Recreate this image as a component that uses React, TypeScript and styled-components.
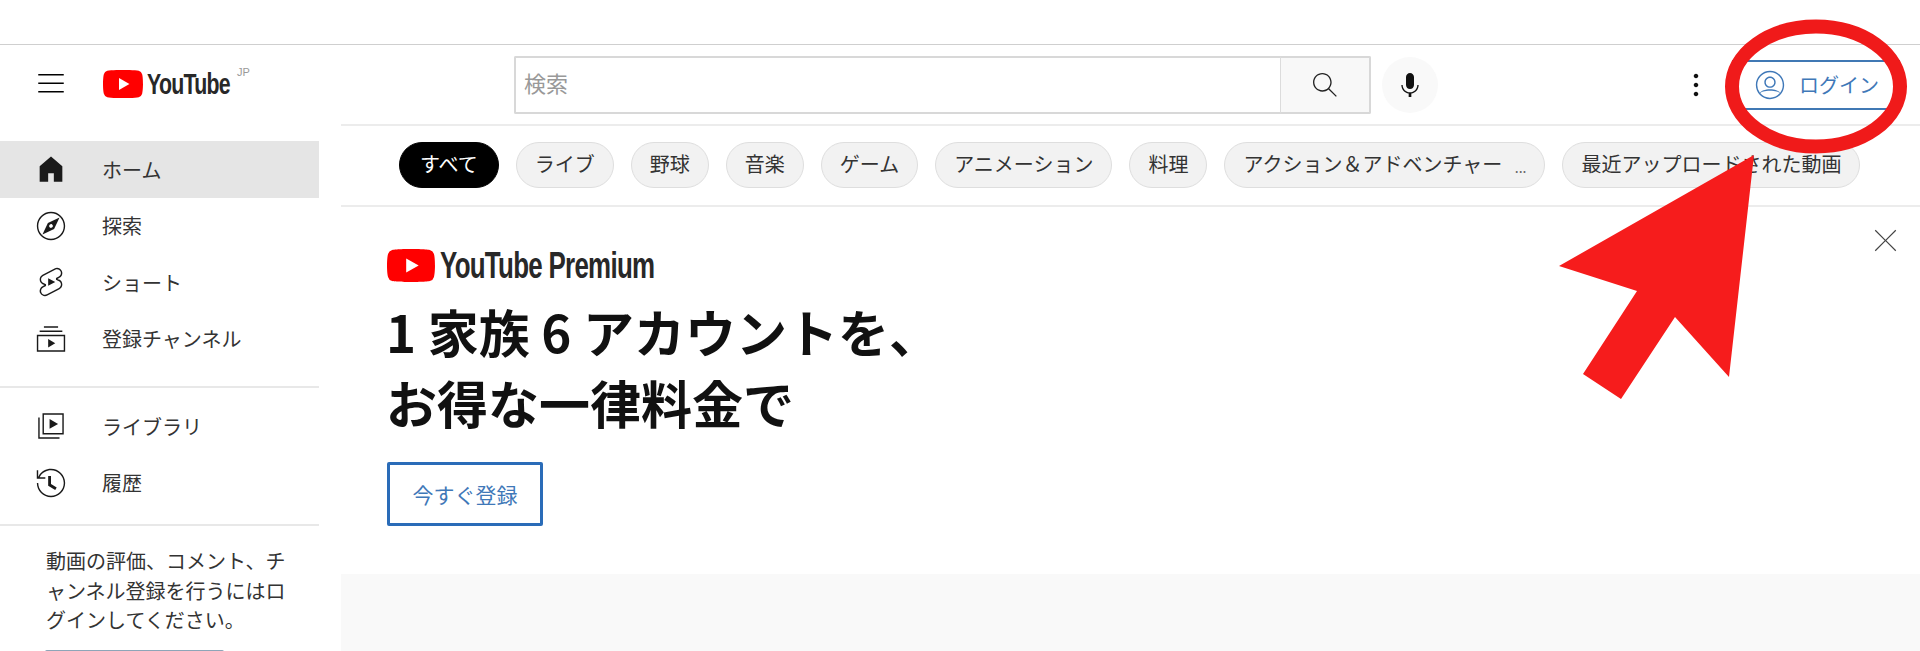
import React from 'react';
import styled, { createGlobalStyle } from 'styled-components';

const JP = `"Noto Sans CJK JP", "Noto Sans", sans-serif`;

const GlobalStyle = createGlobalStyle`
  html, body {
    margin: 0;
    padding: 0;
    background: #fff;
    font-family: ${JP};
  }
`;

// Styled components

const Page = styled.div`
  position: relative;
  width: 1920px;
  height: 651px;
  overflow: hidden;
  display: flex;
  flex-direction: column;
`;

const TopStrip = styled.div`
  height: 44px;
  flex: none;
  border-bottom: 1px solid #cfcfcf;
`;

const Body = styled.div`
  flex: 1;
  display: flex;
  min-height: 0;
`;

const Sidebar = styled.aside`
  width: 319px;
  margin-right: 22px;
  flex: none;
  display: flex;
  flex-direction: column;
`;

const Masthead = styled.div`
  height: 96px;
  flex: none;
  display: flex;
  align-items: center;
  padding: 0 0 18px 34px;
  box-sizing: border-box;
`;

const Logo = styled.div<{ $gap?: number }>`
  display: flex;
  align-items: center;
  gap: ${({ $gap }) => $gap ?? 4}px;
`;

const MastLogo = styled(Logo)`
  margin-left: 35px;
`;

const Wordmark = styled.span<{ $size: number; $scale: number }>`
  display: inline-block;
  font-family: "Liberation Sans", sans-serif;
  font-weight: 700;
  font-size: ${({ $size }) => $size}px;
  letter-spacing: -1px;
  color: #282828;
  transform: scaleX(${({ $scale }) => $scale});
  transform-origin: left center;
  white-space: nowrap;
`;

const MastWordmark = styled(Wordmark)`
  width: 83px;
`;

const Region = styled.span`
  font-family: "Liberation Sans", sans-serif;
  font-size: 11px;
  line-height: 13px;
  color: #999;
  align-self: flex-start;
  margin: -1px 0 0 3px;
`;

const Nav = styled.nav`
  display: flex;
  flex-direction: column;
  margin-bottom: 1px;
`;

const NavGroup = styled(Nav)`
  border-bottom: 2px solid #e8e8e8;
  padding-bottom: 19px;
`;

const SecondGroup = styled(NavGroup)`
  padding-top: 9px;
  padding-bottom: 13px;
`;

const NavRow = styled.a<{ $active?: boolean }>`
  height: 56.5px;
  flex: none;
  display: flex;
  align-items: center;
  gap: 34px;
  padding-left: 34px;
  font-size: 20px;
  color: #333;
  background: ${({ $active }) => ($active ? '#e5e5e5' : 'transparent')};
`;

const Icon = styled.svg<{ $size?: number }>`
  width: ${({ $size }) => $size ?? 34}px;
  height: ${({ $size }) => $size ?? 34}px;
  flex: none;
  fill: currentColor;
  display: block;
`;

const NavIcon = styled(Icon)`
  color: #1a1a1a;
`;

const LoginHint = styled.p`
  margin: 0;
  padding: 19px 30px 0 46px;
  font-size: 20px;
  line-height: 29.5px;
  color: #333;
`;

const HintButton = styled.div`
  margin: 15px 0 0 45px;
  width: 175px;
  height: 40px;
  border: 2px solid #8ea5b8;
  border-radius: 2px;
`;

const Main = styled.main`
  flex: 1;
  min-width: 0;
  position: relative;
  display: flex;
  flex-direction: column;
  background: #f9f9f9;
`;

const Header = styled.header`
  height: 79px;
  flex: none;
  background: #fff;
  border-bottom: 2px solid #ececec;
  display: flex;
  align-items: center;
  padding: 0 20px 0 173px;
`;

const SearchBox = styled.div`
  width: 756px;
  height: 49px;
  border: 2px solid #d8d8d8;
  border-right: none;
  border-radius: 2px 0 0 2px;
  display: flex;
  align-items: center;
  padding: 0 0 5px 8px;
  font-size: 22px;
  color: #999;
  flex: none;
`;

const SearchButton = styled.div`
  width: 88px;
  height: 54px;
  flex: none;
  border: 2px solid #d8d8d8;
  border-left: 1px solid #dcdcdc;
  border-radius: 0 2px 2px 0;
  background: #f8f8f8;
  display: flex;
  align-items: center;
  justify-content: center;
  color: #222;
`;

const MicButton = styled.div`
  width: 56px;
  height: 56px;
  flex: none;
  margin-left: 11px;
  border-radius: 50%;
  background: #f9f9f9;
  display: flex;
  align-items: center;
  justify-content: center;
  color: #111;
`;

const HeaderEnd = styled.div`
  margin-left: auto;
  display: flex;
  align-items: center;
  gap: 18px;
`;

const Kebab = styled.div`
  color: #111;
  display: flex;
`;

const LoginButton = styled.div`
  width: 168px;
  height: 50px;
  box-sizing: border-box;
  border: 2px solid #4078b4;
  display: flex;
  align-items: center;
  gap: 12px;
  padding-left: 19px;
  font-size: 20px;
  color: #3f78b8;
`;

const ChipBar = styled.div`
  height: 77px;
  flex: none;
  background: #fff;
  border-bottom: 2px solid #ececec;
  display: flex;
  align-items: center;
  gap: 17px;
  padding: 0 0 2px 58px;
`;

const Chip = styled.div<{ $active?: boolean; $width?: number }>`
  height: 46px;
  box-sizing: border-box;
  padding: 0 ${({ $active }) => ($active ? 20 : 18)}px 3px;
  ${({ $width }) => ($width ? `width: ${$width}px;` : '')}
  border-radius: 23px;
  border: 1px solid ${({ $active }) => ($active ? '#000' : '#dedede')};
  background: ${({ $active }) => ($active ? '#000' : '#f2f2f2')};
  color: ${({ $active }) => ($active ? '#fff' : '#333')};
  font-size: 20px;
  display: flex;
  align-items: center;
  white-space: nowrap;
  flex: none;
`;

const Ellipsis = styled.span`
  margin-left: auto;
  font-size: 14px;
  color: #666;
  padding-top: 8px;
`;

const Banner = styled.section`
  position: relative;
  height: 367px;
  flex: none;
  background: #fff;
  box-sizing: border-box;
  padding: 42px 0 0 46px;
`;

const PremiumLogo = styled(Logo)`
  height: 33px;
`;

const Headline = styled.h1`
  margin: 14px 0 0 -1px;
  font-size: 51px;
  line-height: 71px;
  font-weight: 700;
  color: #111;
`;

const SignupButton = styled.div`
  margin-top: 24px;
  width: 156px;
  height: 64px;
  box-sizing: border-box;
  border: 3px solid #2a6cb8;
  border-radius: 2px;
  display: flex;
  align-items: center;
  justify-content: center;
  font-size: 21px;
  color: #3f78b8;
`;

const CloseButton = styled.div`
  position: absolute;
  top: 19px;
  right: 20px;
  color: #444;
  display: flex;
`;

const Annotation = styled.svg`
  position: absolute;
  left: 0;
  top: 0;
  width: 1920px;
  height: 651px;
  pointer-events: none;
`;

// Icon paths

const paths = {
  menu: 'M21 6H3V5h18v1zm0 5H3v1h18v-1zm0 6H3v1h18v-1z',
  home: 'M4 21V10.08l8-6.96 8 6.96V21h-6v-6h-4v6H4z',
  explore:
    'm9.8 9.8-3.83 8.23 8.23-3.83 3.83-8.23-8.23 3.83zm3.28 2.97c-.21.29-.51.48-.86.54-.07.01-.15.02-.22.02-.28 0-.54-.08-.77-.25-.29-.21-.48-.51-.54-.86-.06-.35.02-.71.23-.99.21-.29.51-.48.86-.54.35-.06.7.02.99.23.29.21.48.51.54.86.06.35-.02.7-.23.99zM12 3c4.96 0 9 4.04 9 9s-4.04 9-9 9-9-4.04-9-9 4.04-9 9-9m0-1C6.48 2 2 6.48 2 12s4.48 10 10 10 10-4.48 10-10S17.52 2 12 2z',
  shorts:
    'M10 14.65v-5.3L15 12l-5 2.65zm7.77-4.33c-.77-.32-1.2-.5-1.2-.5L18 9.06c1.84-.96 2.53-3.23 1.56-5.06s-3.24-2.53-5.07-1.56L6 6.94c-1.29.68-2.07 2.04-2 3.49.07 1.42.93 2.67 2.22 3.25.03.01 1.2.5 1.2.5L6 14.93c-1.83.97-2.53 3.24-1.56 5.07.97 1.83 3.24 2.53 5.07 1.56l8.5-4.5c1.29-.68 2.06-2.04 1.99-3.49-.07-1.42-.94-2.68-2.23-3.25zm-.23 5.86l-8.5 4.5c-1.34.71-3.01.2-3.72-1.14-.71-1.34-.2-3.01 1.14-3.72l2.04-1.08v-1.21l-.69-.28-1.11-.46c-.99-.41-1.65-1.35-1.7-2.41-.05-1.06.52-2.06 1.46-2.56l8.5-4.5c1.34-.71 3.01-.2 3.72 1.14.71 1.34.2 3.01-1.14 3.72L15.5 9.26v1.21l1.8.74c.99.41 1.65 1.35 1.7 2.41.05 1.06-.52 2.06-1.46 2.56z',
  subs: 'M10 18v-6l5 3-5 3zm7-15H7v1h10V3zm3 3H4v1h16V6zm2 3H2v12h20V9zM3 10h18v10H3V10z',
  library: 'm11 7 6 3.5-6 3.5V7zm7 13H4V6H3v15h15v-1zm3-2H6V3h15v15zM7 17h13V4H7v13z',
  history:
    'M14.97 16.95 10 13.87V7h2v5.76l4.03 2.49-1.06 1.7zM22 12c0 5.51-4.49 10-10 10S2 17.51 2 12h1c0 4.96 4.04 9 9 9s9-4.04 9-9-4.04-9-9-9C8.81 3 5.92 4.64 4.28 7.38c-.11.18-.22.37-.31.56L3.94 8H8v1H1.96V3h1v4.74c.04-.09.07-.17.11-.25.11-.22.23-.42.35-.63C5.22 3.86 8.51 2 12 2c5.51 0 10 4.49 10 10z',
  search:
    'm20.87 20.17-5.59-5.59C16.35 13.35 17 11.75 17 10c0-3.87-3.13-7-7-7s-7 3.13-7 7 3.13 7 7 7c1.75 0 3.35-.65 4.58-1.71l5.59 5.59.7-.71zM10 16c-3.31 0-6-2.69-6-6s2.69-6 6-6 6 2.69 6 6-2.69 6-6 6z',
  mic: 'M12 3c-1.66 0-3 1.37-3 3.07v5.86c0 1.7 1.34 3.07 3 3.07s3-1.37 3-3.07V6.07C15 4.37 13.66 3 12 3zm6.5 9h-1c0 3.03-2.47 5.5-5.5 5.5S6.5 15.03 6.5 12h-1c0 3.24 2.39 5.93 5.5 6.41V21h2v-2.59c3.11-.48 5.5-3.17 5.5-6.41z',
  kebab:
    'M12 16.5c.83 0 1.5.67 1.5 1.5s-.67 1.5-1.5 1.5-1.5-.67-1.5-1.5.67-1.5 1.5-1.5zM10.5 12c0 .83.67 1.5 1.5 1.5s1.5-.67 1.5-1.5-.67-1.5-1.5-1.5-1.5.67-1.5 1.5zm0-6c0 .83.67 1.5 1.5 1.5s1.5-.67 1.5-1.5-.67-1.5-1.5-1.5-1.5.67-1.5 1.5z',
  account:
    'M12 2C6.48 2 2 6.48 2 12s4.48 10 10 10 10-4.48 10-10S17.52 2 12 2zM3 12c0-4.96 4.04-9 9-9s9 4.04 9 9c0 2.05-.69 3.94-1.85 5.46-.97-1.26-3.65-2.46-7.15-2.46s-6.18 1.2-7.15 2.46A8.96 8.96 0 0 1 3 12zm9 9c-2.79 0-5.28-1.28-6.93-3.28C5.72 16.8 8.2 16 12 16s6.28.8 6.93 1.72A8.96 8.96 0 0 1 12 21zm0-15c-2.21 0-4 1.79-4 4s1.79 4 4 4 4-1.79 4-4-1.79-4-4-4zm0 7c-1.65 0-3-1.35-3-3s1.35-3 3-3 3 1.35 3 3-1.35 3-3 3z',
  close:
    'm12.71 12 8.15 8.15-.71.71L12 12.71l-8.15 8.15-.71-.71L11.29 12 3.15 3.85l.71-.71L12 11.29l8.15-8.15.71.71L12.71 12z',
};

const Glyph = ({ d, size, as: Comp = Icon }: { d: string; size?: number; as?: typeof Icon }) => (
  <Comp viewBox="0 0 24 24" $size={size}>
    <path d={d} />
  </Comp>
);

const YtMark = ({ width, height }: { width: number; height: number }) => (
  <svg width={width} height={height} viewBox="0 0 28 20" preserveAspectRatio="none">
    <path
      fill="#f00"
      d="M27.4 3.1A3.5 3.5 0 0 0 25 .6C22.8 0 14 0 14 0S5.2 0 3 .6A3.5 3.5 0 0 0 .6 3.1C0 5.3 0 10 0 10s0 4.7.6 6.9A3.5 3.5 0 0 0 3 19.4C5.2 20 14 20 14 20s8.8 0 11-.6a3.5 3.5 0 0 0 2.4-2.5c.6-2.2.6-6.9.6-6.9s0-4.7-.6-6.9z"
    />
    <path fill="#fff" d="M11.2 14.3 18.5 10l-7.3-4.3z" />
  </svg>
);

const primaryNav = [
  { icon: paths.home, label: 'ホーム', active: true },
  { icon: paths.explore, label: '探索' },
  { icon: paths.shorts, label: 'ショート' },
  { icon: paths.subs, label: '登録チャンネル' },
];

const secondaryNav = [
  { icon: paths.library, label: 'ライブラリ' },
  { icon: paths.history, label: '履歴' },
];

const chips = ['ライブ', '野球', '音楽', 'ゲーム', 'アニメーション', '料理'];

const App = () => (
  <Page>
    <GlobalStyle />
    <TopStrip />
    <Body>
      <Sidebar>
        <Masthead>
          <Glyph d={paths.menu} />
          <MastLogo>
            <YtMark width={40} height={28} />
            <MastWordmark $size={30} $scale={0.71}>YouTube</MastWordmark>
            <Region>JP</Region>
          </MastLogo>
        </Masthead>
        <NavGroup>
          {primaryNav.map((item) => (
            <NavRow key={item.label} $active={item.active}>
              <Glyph d={item.icon} as={NavIcon} />
              {item.label}
            </NavRow>
          ))}
        </NavGroup>
        <SecondGroup>
          {secondaryNav.map((item) => (
            <NavRow key={item.label}>
              <Glyph d={item.icon} as={NavIcon} />
              {item.label}
            </NavRow>
          ))}
        </SecondGroup>
        <LoginHint>動画の評価、コメント、チャンネル登録を行うにはログインしてください。</LoginHint>
        <HintButton />
      </Sidebar>
      <Main>
        <Header>
          <SearchBox>検索</SearchBox>
          <SearchButton>
            <Glyph d={paths.search} size={32} />
          </SearchButton>
          <MicButton>
            <Glyph d={paths.mic} size={32} />
          </MicButton>
          <HeaderEnd>
            <Kebab>
              <Glyph d={paths.kebab} size={36} />
            </Kebab>
            <LoginButton>
              <Glyph d={paths.account} />
              ログイン
            </LoginButton>
          </HeaderEnd>
        </Header>
        <ChipBar>
          <Chip $active>すべて</Chip>
          {chips.map((label) => (
            <Chip key={label}>{label}</Chip>
          ))}
          <Chip $width={321}>
            アクション＆アドベンチャー<Ellipsis>...</Ellipsis>
          </Chip>
          <Chip>最近アップロードされた動画</Chip>
        </ChipBar>
        <Banner>
          <PremiumLogo $gap={5}>
            <YtMark width={48} height={33} />
            <Wordmark $size={36} $scale={0.72}>YouTube Premium</Wordmark>
          </PremiumLogo>
          <Headline>
            1 家族 6 アカウントを、
            <br />
            お得な一律料金で
          </Headline>
          <SignupButton>今すぐ登録</SignupButton>
          <CloseButton>
            <Glyph d={paths.close} size={29} />
          </CloseButton>
        </Banner>
      </Main>
    </Body>
    <Annotation viewBox="0 0 1920 651">
      <ellipse cx="1816" cy="86.5" rx="84" ry="60" fill="none" stroke="#f01a1a" strokeWidth="14" />
      <polygon
        fill="#f61c1c"
        points="1754,155 1559,266 1637,291 1583,374 1621,399 1675,317 1729,377"
      />
    </Annotation>
  </Page>
);

export default App;
